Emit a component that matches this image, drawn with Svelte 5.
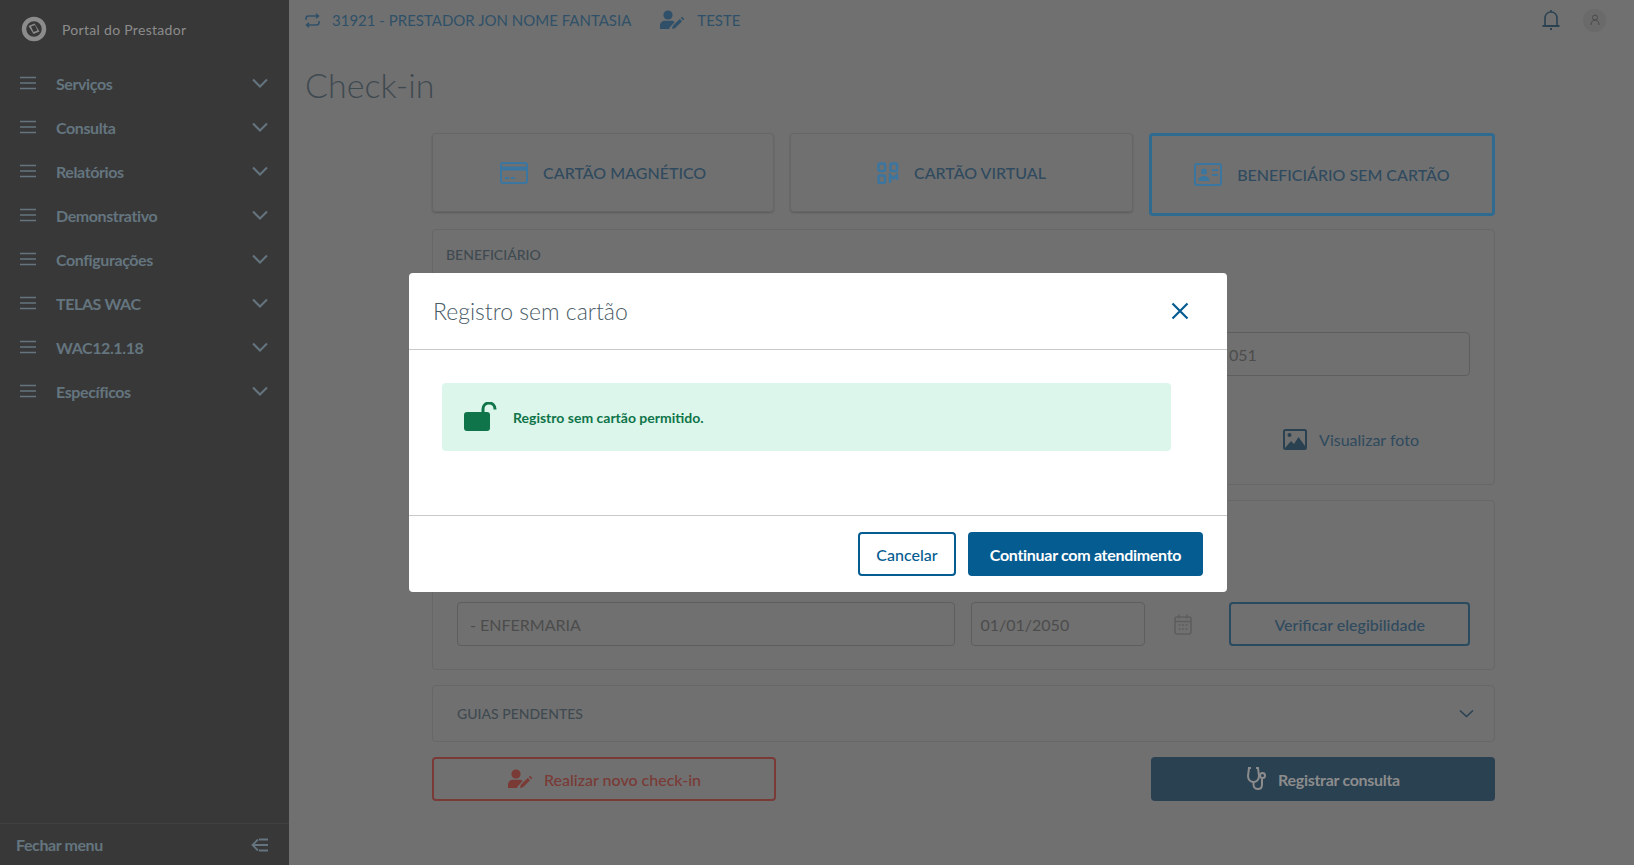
<script>
  const menuItems = ["Serviços", "Consulta", "Relatórios", "Demonstrativo", "Configurações", "TELAS WAC", "WAC12.1.18", "Específicos"];
</script>

{#snippet userPen(color)}
  <svg width="27" height="20" viewBox="0 0 27 20" fill={color}>
    <circle cx="9" cy="5" r="4.6" />
    <path d="M1 19v-3.500c0-3 2.500-4.800 5-4.800h6c1.500 0 2.800.5 3.700 1.400L10.600 17.500l-.4 1.500z" />
    <path d="M13 19l.7-3 7-7 2.300 2.300-7 7z" />
    <path d="M21.800 8l1.200-1.200 2.300 2.300-1.200 1.200z" />
  </svg>
{/snippet}

<div class="page">
  <!-- SIDEBAR -->
  <aside class="sidebar">
    <div class="brand">
      <svg width="26" height="26" viewBox="0 0 26 26">
        <circle cx="13" cy="13" r="10" fill="none" stroke="#8c8c8c" stroke-width="4.500" />
        <path d="M7.500 10l6-2.500 5 8-6 2.500z" fill="#8c8c8c" />
        <path d="M10 10.500l4-1.500 2.500 5.500-4 1.500z" fill="#383838" />
      </svg>
      <span>Portal do Prestador</span>
    </div>
    <nav>
      {#each menuItems as item}
        <div class="nav-item">
          <svg class="burger" width="18" height="14" viewBox="0 0 18 14" stroke="#64757f" stroke-width="1.600">
            <path d="M1 1.500h16M1 7h16M1 12.500h16" />
          </svg>
          <span>{item}</span>
          <svg class="chev" width="16" height="10" viewBox="0 0 16 10" fill="none" stroke="#64757f" stroke-width="2">
            <path d="M1 1.500l7 7 7-7" />
          </svg>
        </div>
      {/each}
    </nav>
    <div class="sidebar-foot">
      <span>Fechar menu</span>
      <svg width="18" height="14" viewBox="0 0 18 14" fill="none" stroke="#64757f" stroke-width="1.800">
        <path d="M7 1.500L1.500 7 7 12.500M1.500 7H17M8 1.500h9M8 12.500h9" />
      </svg>
    </div>
  </aside>

  <!-- MAIN -->
  <main class="main">
    <header class="topbar">
      <svg width="15" height="15" viewBox="0 0 15 15" fill="none" stroke="#2f5068" stroke-width="1.500">
        <path d="M1 7V5.500C1 4 2 3 3.500 3H13M11 .8L13.500 3 11 5.200M14 8v1.500c0 1.500-1 2.500-2.500 2.500H2M4 9.800L1.500 12 4 14.200" />
      </svg>
      <span class="provider">31921 - PRESTADOR JON NOME FANTASIA</span>
      {@render userPen("#2f5068")}
      <span class="profile">TESTE</span>
      <div class="top-right">
        <svg width="20" height="22" viewBox="0 0 20 22" fill="none" stroke="#2a4152" stroke-width="1.600">
          <path d="M10 1v2M4 16V9.500C4 5.500 6.500 3 10 3s6 2.500 6 6.500V16" />
          <path d="M1.500 17h17" stroke-width="2" />
          <path d="M9 20h2" stroke-width="1.800" />
        </svg>
        <div class="avatar">
          <svg width="10" height="12" viewBox="0 0 10 12" fill="none" stroke="#4a4a4a" stroke-width="1">
            <circle cx="5" cy="3.500" r="2.500" /><path d="M1 11c0-3 1.500-5 4-5s4 2 4 5" />
          </svg>
        </div>
      </div>
    </header>

    <h1>Check-in</h1>

    <div class="content">
      <div class="tabs">
        <div class="tab">
          <svg width="28" height="22" viewBox="0 0 28 22">
            <rect x="1" y="1" width="26" height="20" rx="2" fill="none" stroke="#3b76a0" stroke-width="2" />
            <rect x="1" y="4.500" width="26" height="4" fill="#3b76a0" />
            <path d="M5 16h4M11 16h4" stroke="#3b76a0" stroke-width="2" />
          </svg>
          <span>CARTÃO MAGNÉTICO</span>
        </div>
        <div class="tab">
          <svg width="22" height="22" viewBox="0 0 22 22" fill="none" stroke="#3b76a0" stroke-width="2.500">
            <rect x="1.500" y="1.500" width="6.500" height="7.500" rx="1.500" />
            <rect x="13.500" y="1.500" width="6.500" height="7.500" rx="1.500" />
            <rect x="1.500" y="13.500" width="6.500" height="7.500" rx="1.500" />
            <path d="M13 21v-8l3.500 3.500L20 13v5" />
          </svg>
          <span>CARTÃO VIRTUAL</span>
        </div>
        <div class="tab active">
          <svg width="28" height="23" viewBox="0 0 28 23">
            <rect x="1" y="1" width="26" height="21" rx="2" fill="none" stroke="#3b76a0" stroke-width="2" />
            <circle cx="10" cy="8.500" r="3" fill="#3b76a0" />
            <path d="M4.500 18c0-3.500 2-5 5.500-5s5.500 1.500 5.500 5z" fill="#3b76a0" />
            <path d="M18 7h6M18 12h6" stroke="#3b76a0" stroke-width="2" />
          </svg>
          <span>BENEFICIÁRIO SEM CARTÃO</span>
        </div>
      </div>

      <section class="panel beneficiary">
        <h2>BENEFICIÁRIO</h2>
        <div class="field-row">
          <div class="input card-no">051</div>
        </div>
        <div class="photo-link">
          <svg width="24" height="21" viewBox="0 0 24 21">
            <rect x="1" y="1" width="22" height="19" rx="1.500" fill="none" stroke="#2a4152" stroke-width="2" />
            <circle cx="6.500" cy="6" r="2" fill="#2a4152" />
            <path d="M2 19l6-7 3 3 4.500-7L22 17v2z" fill="#2a4152" />
          </svg>
          <span>Visualizar foto</span>
        </div>
      </section>

      <section class="panel eligibility">
        <div class="input room">- ENFERMARIA</div>
        <div class="input date">01/01/2050</div>
        <svg class="calendar" width="18" height="21" viewBox="0 0 18 21" fill="none" stroke="#5d5d5d" stroke-width="1.500">
          <rect x="1" y="3" width="16" height="17" rx="2" />
          <path d="M5 .5v4M13 .5v4M1 7.500h16" />
          <path d="M4.500 11h2M8 11h2M11.500 11h2M4.500 15h2M8 15h2M11.500 15h2" stroke-width="1.400" />
        </svg>
        <div class="btn-outline">Verificar elegibilidade</div>
      </section>

      <section class="panel pending">
        <h2>GUIAS PENDENTES</h2>
        <svg width="15" height="9" viewBox="0 0 15 9" fill="none" stroke="#2a4152" stroke-width="1.600">
          <path d="M1 1.500l6.500 6 6.500-6" />
        </svg>
      </section>

      <div class="actions">
        <div class="btn-danger">
          {@render userPen("#7a3a36")}
          <span>Realizar novo check-in</span>
        </div>
        <div class="btn-register">
          <svg width="22" height="24" viewBox="0 0 22 24" fill="none" stroke="#8c8c8c" stroke-width="2">
            <path d="M5 1H3L2 9c0 3.500 2.500 6 5.500 6S13 12.500 13 9L12 1h-2" />
            <path d="M7.500 15v2.500c0 2.500 1.800 4.500 4.500 4.500s4-2 4-4.500V12" />
            <circle cx="16.500" cy="8.500" r="2.500" />
          </svg>
          <span>Registrar consulta</span>
        </div>
      </div>
    </div>
  </main>

  <!-- MODAL -->
  <div class="modal">
    <div class="modal-head">
      <span>Registro sem cartão</span>
      <svg width="18" height="18" viewBox="0 0 18 18" stroke="#055c91" stroke-width="2.200">
        <path d="M1.500 1.500l15 15M16.500 1.500l-15 15" />
      </svg>
    </div>
    <div class="modal-body">
      <div class="alert">
        <svg width="33" height="30" viewBox="0 0 33 30" fill="#0f7449">
          <rect x="0" y="10" width="26" height="19" rx="3" />
          <path d="M14 11V7c0-3.500 2.500-6 6-6s6 2.500 6 6v.500" transform="translate(5 0)" fill="none" stroke="#0f7449" stroke-width="3" />
        </svg>
        <span>Registro sem cartão permitido.</span>
      </div>
    </div>
    <div class="modal-foot">
      <div class="btn-cancel">Cancelar</div>
      <div class="btn-primary">Continuar com atendimento</div>
    </div>
  </div>
</div>

<style>
  :global(body) {
    margin: 0;
    font-family: "Lato", "Noto Sans", sans-serif;
  }
  .page {
    display: flex;
    height: 865px;
    overflow: hidden;
    position: relative;
    background: #707070;
  }
  .sidebar {
    width: 289px;
    flex-shrink: 0;
    background: #383838;
    display: flex;
    flex-direction: column;
  }
  .brand {
    height: 58px;
    display: flex;
    align-items: center;
    gap: 15px;
    padding-left: 21px;
    color: #8c8c8c;
    font-size: 14px;
    letter-spacing: 0.3px;
  }
  nav {
    flex: 1;
    padding-top: 3px;
  }
  .nav-item {
    height: 44px;
    display: flex;
    align-items: center;
    padding: 0 21px 0 19px;
    color: #64757f;
    font-size: 16px;
    font-weight: 700;
    letter-spacing: -0.4px;
  }
  .nav-item span {
    margin-left: 19px;
    flex: 1;
  }
  .sidebar-foot {
    height: 41px;
    border-top: 1px solid #404040;
    display: flex;
    align-items: center;
    justify-content: space-between;
    padding: 0 20px 0 16px;
    color: #64757f;
    font-size: 16px;
    font-weight: 700;
    letter-spacing: -0.4px;
  }

  .main {
    flex: 1;
    padding-left: 16px;
    min-width: 0;
  }
  .topbar {
    height: 40px;
    display: flex;
    align-items: center;
    color: #2f5068;
    font-size: 15px;
  }
  .provider {
    margin: 0 28px 0 12px;
  }
  .profile {
    margin-left: 11px;
  }
  .top-right {
    margin-left: auto;
    margin-right: 28px;
    display: flex;
    align-items: center;
    gap: 22px;
  }
  .avatar {
    width: 23px;
    height: 23px;
    border-radius: 50%;
    background: #6a6a6a;
    display: flex;
    align-items: center;
    justify-content: center;
  }
  h1 {
    margin: 22px 0 0;
    height: 71px;
    font-size: 34px;
    font-weight: 300;
    line-height: 46px;
    color: #3f4a50;
  }
  .content {
    margin-left: 127px;
    width: 1063px;
  }
  .tabs {
    display: flex;
    gap: 16px;
    align-items: flex-start;
  }
  .tab {
    flex: 1;
    height: 79px;
    box-sizing: border-box;
    border: 1px solid #666;
    border-radius: 4px;
    box-shadow: 0 1px 2px rgba(0, 0, 0, 0.2);
    display: flex;
    align-items: center;
    justify-content: center;
    gap: 15px;
    color: #2f4a5e;
    font-size: 16px;
    font-weight: 500;
  }
  .tab.active {
    height: 83px;
    border: 3px solid #2f6a90;
    box-shadow: none;
  }
  .panel {
    border: 1px solid #676767;
    border-radius: 4px;
    box-sizing: border-box;
    position: relative;
  }
  h2 {
    margin: 0;
    font-size: 14px;
    font-weight: 500;
    color: #3f4a50;
  }
  .beneficiary {
    margin-top: 13px;
    height: 256px;
    padding: 16px 24px 0 13px;
  }
  .field-row {
    display: flex;
    justify-content: flex-end;
    margin-top: 69px;
  }
  .input {
    height: 44px;
    box-sizing: border-box;
    border: 1px solid #5e5e5e;
    border-radius: 4px;
    display: flex;
    align-items: center;
    color: #4c4c4c;
    font-size: 16px;
  }
  .card-no {
    width: 300px;
    padding-left: 58px;
  }
  .photo-link {
    display: flex;
    align-items: center;
    justify-content: flex-end;
    gap: 12px;
    margin: 53px 51px 0 0;
    color: #2f4a5e;
    font-size: 16px;
  }
  .eligibility {
    margin-top: 15px;
    height: 170px;
    padding: 101px 24px 0 24px;
    display: flex;
    align-items: flex-start;
  }
  .room {
    width: 499px;
    padding-left: 12px;
  }
  .date {
    width: 174px;
    margin-left: 16px;
    padding-left: 8px;
  }
  .calendar {
    margin: 12px 37px 0 29px;
  }
  .btn-outline {
    width: 241px;
    height: 44px;
    box-sizing: border-box;
    border: 2px solid #2a4a60;
    border-radius: 4px;
    display: flex;
    align-items: center;
    justify-content: center;
    color: #2f4a5e;
    font-size: 16px;
    font-weight: 500;
  }
  .pending {
    margin-top: 15px;
    height: 57px;
    display: flex;
    align-items: center;
    justify-content: space-between;
    padding: 0 20px 0 24px;
  }
  .actions {
    margin-top: 15px;
    display: flex;
    justify-content: space-between;
  }
  .btn-danger,
  .btn-register {
    width: 344px;
    height: 44px;
    box-sizing: border-box;
    border-radius: 4px;
    display: flex;
    align-items: center;
    justify-content: center;
    gap: 10px;
    font-size: 16px;
    font-weight: 500;
  }
  .btn-danger {
    border: 2px solid #7a3a36;
    color: #7a3a36;
  }
  .btn-register {
    background: #2a4152;
    color: #8c8c8c;
    font-weight: 700;
    letter-spacing: -0.3px;
  }

  .modal {
    position: absolute;
    left: 409px;
    top: 273px;
    width: 818px;
    height: 319px;
    background: #fff;
    border-radius: 4px;
    display: flex;
    flex-direction: column;
  }
  .modal-head {
    height: 77px;
    box-sizing: border-box;
    border-bottom: 1px solid #c9c9c9;
    display: flex;
    align-items: center;
    justify-content: space-between;
    padding: 0 38px 0 24px;
    font-size: 23px;
    font-weight: 300;
    color: #4a5c66;
  }
  .modal-body {
    flex: 1;
    padding: 33px 56px 0 33px;
  }
  .alert {
    height: 68px;
    background: #dcf6eb;
    border-radius: 4px;
    display: flex;
    align-items: center;
    gap: 16px;
    padding-left: 22px;
    color: #0f7449;
    font-size: 14px;
    font-weight: 700;
  }
  .modal-foot {
    height: 77px;
    box-sizing: border-box;
    border-top: 1px solid #c9c9c9;
    display: flex;
    align-items: center;
    justify-content: flex-end;
    gap: 12px;
    padding: 0 24px;
    font-size: 16px;
  }
  .btn-cancel,
  .btn-primary {
    height: 44px;
    box-sizing: border-box;
    border-radius: 4px;
    display: flex;
    align-items: center;
    justify-content: center;
  }
  .btn-cancel {
    width: 98px;
    border: 2px solid #055c91;
    color: #055c91;
    font-weight: 500;
  }
  .btn-primary {
    width: 235px;
    background: #055c91;
    color: #fff;
    font-weight: 700;
    letter-spacing: -0.3px;
  }
</style>
